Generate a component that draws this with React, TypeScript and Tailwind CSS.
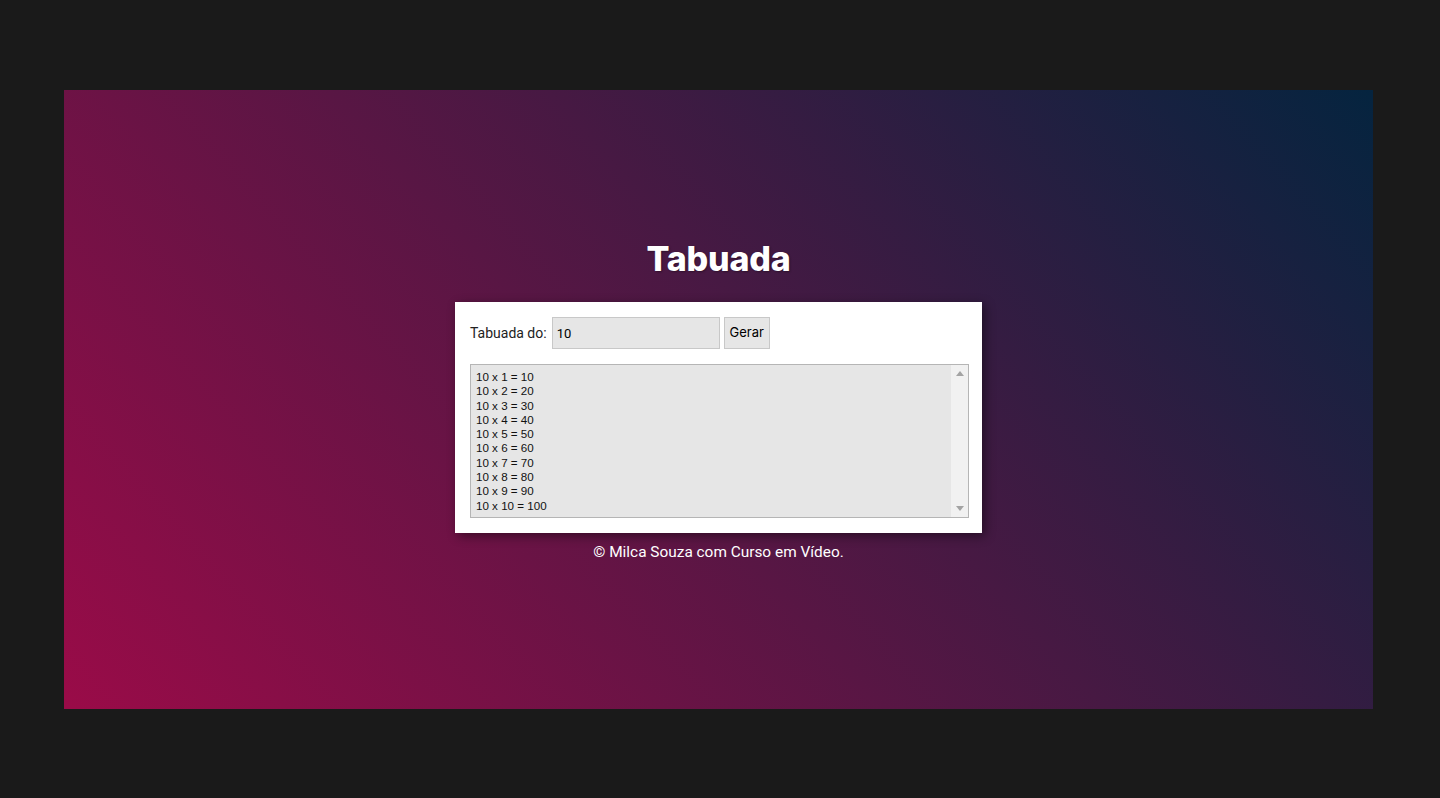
import React from 'react';

const linhas = Array.from({ length: 10 }, (_, i) => `10 x ${i + 1} = ${10 * (i + 1)}`);

export default function App() {
  return (
    <div className="min-h-screen w-full bg-[#1a1a1a] pt-[90px] pl-[64px] font-['Roboto',sans-serif]">
      <main className="w-[1309px] h-[619px] bg-[linear-gradient(48deg,#9a0b48,#05243f)] flex flex-col items-center pt-[147px]">
        <h1 className="text-white font-['Inter',sans-serif] font-extrabold text-[34px] leading-[43px] tracking-[-0.2px] [text-shadow:1px_1px_2px_rgba(0,0,0,0.35)]">
          Tabuada
        </h1>
        <section className="mt-[22px] w-[527px] bg-white p-[15px] shadow-[3px_3px_10px_rgba(0,0,0,0.45)]">
          <div className="flex items-center h-[32px]">
            <label className="text-[14px] text-[#222] mr-[5px]">Tabuada do:</label>
            <input
              type="number"
              defaultValue={10}
              className="w-[168px] h-[32px] bg-[#e6e6e6] border border-[#c8c8c8] px-[4px] text-[13px] text-black outline-none [appearance:textfield]"
            />
            <button className="ml-[4px] w-[46px] h-[32px] bg-[#e6e6e6] border border-[#c8c8c8] text-[13px] font-['Inter',sans-serif] text-black">
              Gerar
            </button>
          </div>
          <div className="mt-[15px] h-[154px] w-[499px] border border-[#b5b5b5] bg-[#e6e6e6] flex">
            <div className="flex-1 pl-[5px] pt-[5px] font-['Liberation_Sans',sans-serif] text-[11.6px] leading-[14.3px] text-[#111]">
              {linhas.map((l) => (
                <div key={l}>{l}</div>
              ))}
            </div>
            <div className="w-[17px] bg-[#f1f1f1] flex flex-col items-center justify-between py-[6px]">
              <svg width="8" height="5" viewBox="0 0 8 5"><path d="M0 5 L4 0 L8 5 Z" fill="#a3a3a3" /></svg>
              <svg width="8" height="5" viewBox="0 0 8 5"><path d="M0 0 L4 5 L8 0 Z" fill="#a3a3a3" /></svg>
            </div>
          </div>
        </section>
        <footer className="mt-[9px] text-white text-[15.4px] leading-[20px]">
          © Milca Souza com Curso em Vídeo.
        </footer>
      </main>
    </div>
  );
}
